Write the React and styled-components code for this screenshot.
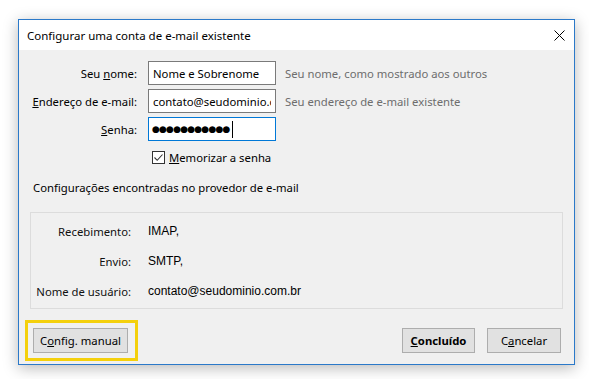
import React from 'react';
import styled, { createGlobalStyle } from 'styled-components';

const GlobalStyle = createGlobalStyle`
  html, body {
    margin: 0;
    padding: 0;
    background: #ffffff;
  }
  body {
    font-family: "Noto Sans", "Open Sans", sans-serif;
    font-size: 11.3px;
    color: #000;
  }
`;

const Page = styled.div`
  width: 589px;
  height: 379px;
  padding: 19px 0 0 18px;
  box-sizing: border-box;
`;

const Window = styled.div`
  width: 557px;
  height: 346px;
  box-sizing: border-box;
  border: 1px solid #2b79c9;
  background: #f0f0f0;
  box-shadow: 0 3px 14px rgba(0, 0, 0, 0.28);
  display: flex;
  flex-direction: column;
`;

const TitleBar = styled.div`
  height: 30px;
  background: #fff;
  display: flex;
  align-items: center;
  justify-content: space-between;
  padding: 0 9px 0 8px;
  font-size: 11.5px;
`;

const CloseButton = styled.div`
  width: 12px;
  height: 12px;
  display: flex;
  align-items: center;
  justify-content: center;
`;

const Body = styled.div`
  flex: 1;
  display: flex;
  flex-direction: column;
  padding: 11px 0 0 0;
`;

const FormGrid = styled.div`
  display: grid;
  grid-template-columns: 118px 128px 1fr;
  column-gap: 11px;
  row-gap: 4px;
  align-items: center;
`;

const Label = styled.label`
  text-align: right;
  white-space: nowrap;
`;

const Field = styled.input`
  box-sizing: border-box;
  width: 128px;
  height: 24px;
  border: 1px solid #7a7a7a;
  background: #fff;
  padding: 0 4px;
  font-family: inherit;
  font-size: 11.3px;
  color: #000;
  outline: none;
`;

const Password = styled.div`
  box-sizing: border-box;
  width: 128px;
  height: 24px;
  border: 1px solid #0078d7;
  background: #fff;
  padding: 0 3px;
  display: flex;
  align-items: center;
  font-family: "DejaVu Sans", sans-serif;
  font-size: 9px;
  letter-spacing: -0.8px;
  line-height: 1;
`;

const Caret = styled.span`
  display: inline-block;
  width: 1px;
  height: 17px;
  background: #000;
  margin-left: 2px;
`;

const Hint = styled.span`
  color: #6d6d6d;
  margin-left: -2px;
  white-space: nowrap;
`;

const CheckRow = styled.div`
  display: flex;
  align-items: center;
  gap: 4px;
  margin: 9px 0 0 133px;
`;

const CheckBox = styled.span`
  width: 13px;
  height: 13px;
  box-sizing: border-box;
  border: 1px solid #333;
  background: #fff;
  display: flex;
  align-items: center;
  justify-content: center;
`;

const SectionTitle = styled.div`
  margin: 15px 0 0 14px;
  line-height: 16px;
`;

const ResultBox = styled.div`
  margin: 16px 11px 0 11px;
  height: 97px;
  box-sizing: border-box;
  border: 1px solid #dcdcdc;
  padding-top: 3px;
  display: grid;
  grid-template-columns: 100px 1fr;
  grid-auto-rows: 30px;
  column-gap: 17px;
  align-items: center;
`;

const ResultLabel = styled.span`
  text-align: right;
  white-space: nowrap;
  color: #111;
`;

const ResultValue = styled.span`
  font-family: "Liberation Sans", Arial, sans-serif;
  font-size: 12px;
  color: #000;
`;

const Footer = styled.div`
  margin-top: auto;
  display: flex;
  align-items: center;
  padding: 0 13px 11px 14px;
  gap: 12px;
`;

const Spacer = styled.div`
  flex: 1;
`;

const Button = styled.button`
  position: relative;
  height: 25px;
  width: ${(p) => p.$w}px;
  box-sizing: border-box;
  border: 1px solid #adadad;
  background: #e1e1e1;
  font-family: inherit;
  font-size: 11.3px;
  font-weight: ${(p) => (p.$primary ? 700 : 400)};
  color: #000;
  padding: 0;
  &::after {
    content: '';
    display: ${(p) => (p.$highlight ? 'block' : 'none')};
    position: absolute;
    top: -9px;
    left: -9px;
    right: -11px;
    bottom: -9px;
    border: 3px solid #f4d00c;
  }
`;

export default function App() {
  return (
    <Page>
      <GlobalStyle />
      <Window>
        <TitleBar>
          <span>Configurar uma conta de e-mail existente</span>
          <CloseButton>
            <svg width="11" height="11" viewBox="0 0 11 11">
              <path d="M0.5 0.5 L10.5 10.5 M10.5 0.5 L0.5 10.5" stroke="#000" strokeWidth="1" />
            </svg>
          </CloseButton>
        </TitleBar>
        <Body>
          <FormGrid>
            <Label>Seu <u>n</u>ome:</Label>
            <Field readOnly value="Nome e Sobrenome" />
            <Hint>Seu nome, como mostrado aos outros</Hint>
            <Label><u>E</u>ndereço de e-mail:</Label>
            <Field readOnly value="contato@seudominio.com.br" />
            <Hint>Seu endereço de e-mail existente</Hint>
            <Label><u>S</u>enha:</Label>
            <Password>
              {'●●●●●●●●●●●'}
              <Caret />
            </Password>
            <span />
          </FormGrid>
          <CheckRow>
            <CheckBox>
              <svg width="11" height="11" viewBox="0 0 11 11">
                <path d="M1.5 5.5 L4.2 8.3 L9.5 2.5" stroke="#333" strokeWidth="1.1" fill="none" />
              </svg>
            </CheckBox>
            <span><u>M</u>emorizar a senha</span>
          </CheckRow>
          <SectionTitle>Configurações encontradas no provedor de e-mail</SectionTitle>
          <ResultBox>
            <ResultLabel>Recebimento:</ResultLabel>
            <ResultValue>IMAP,</ResultValue>
            <ResultLabel>Envio:</ResultLabel>
            <ResultValue>SMTP,</ResultValue>
            <ResultLabel>Nome de usuário:</ResultLabel>
            <ResultValue>contato@seudominio.com.br</ResultValue>
          </ResultBox>
          <Footer>
            <Button $w={95} $highlight>C<u>o</u>nfig. manual</Button>
            <Spacer />
            <Button $w={73} $primary><u>C</u>oncluído</Button>
            <Button $w={74}>C<u>a</u>ncelar</Button>
          </Footer>
        </Body>
      </Window>
    </Page>
  );
}
